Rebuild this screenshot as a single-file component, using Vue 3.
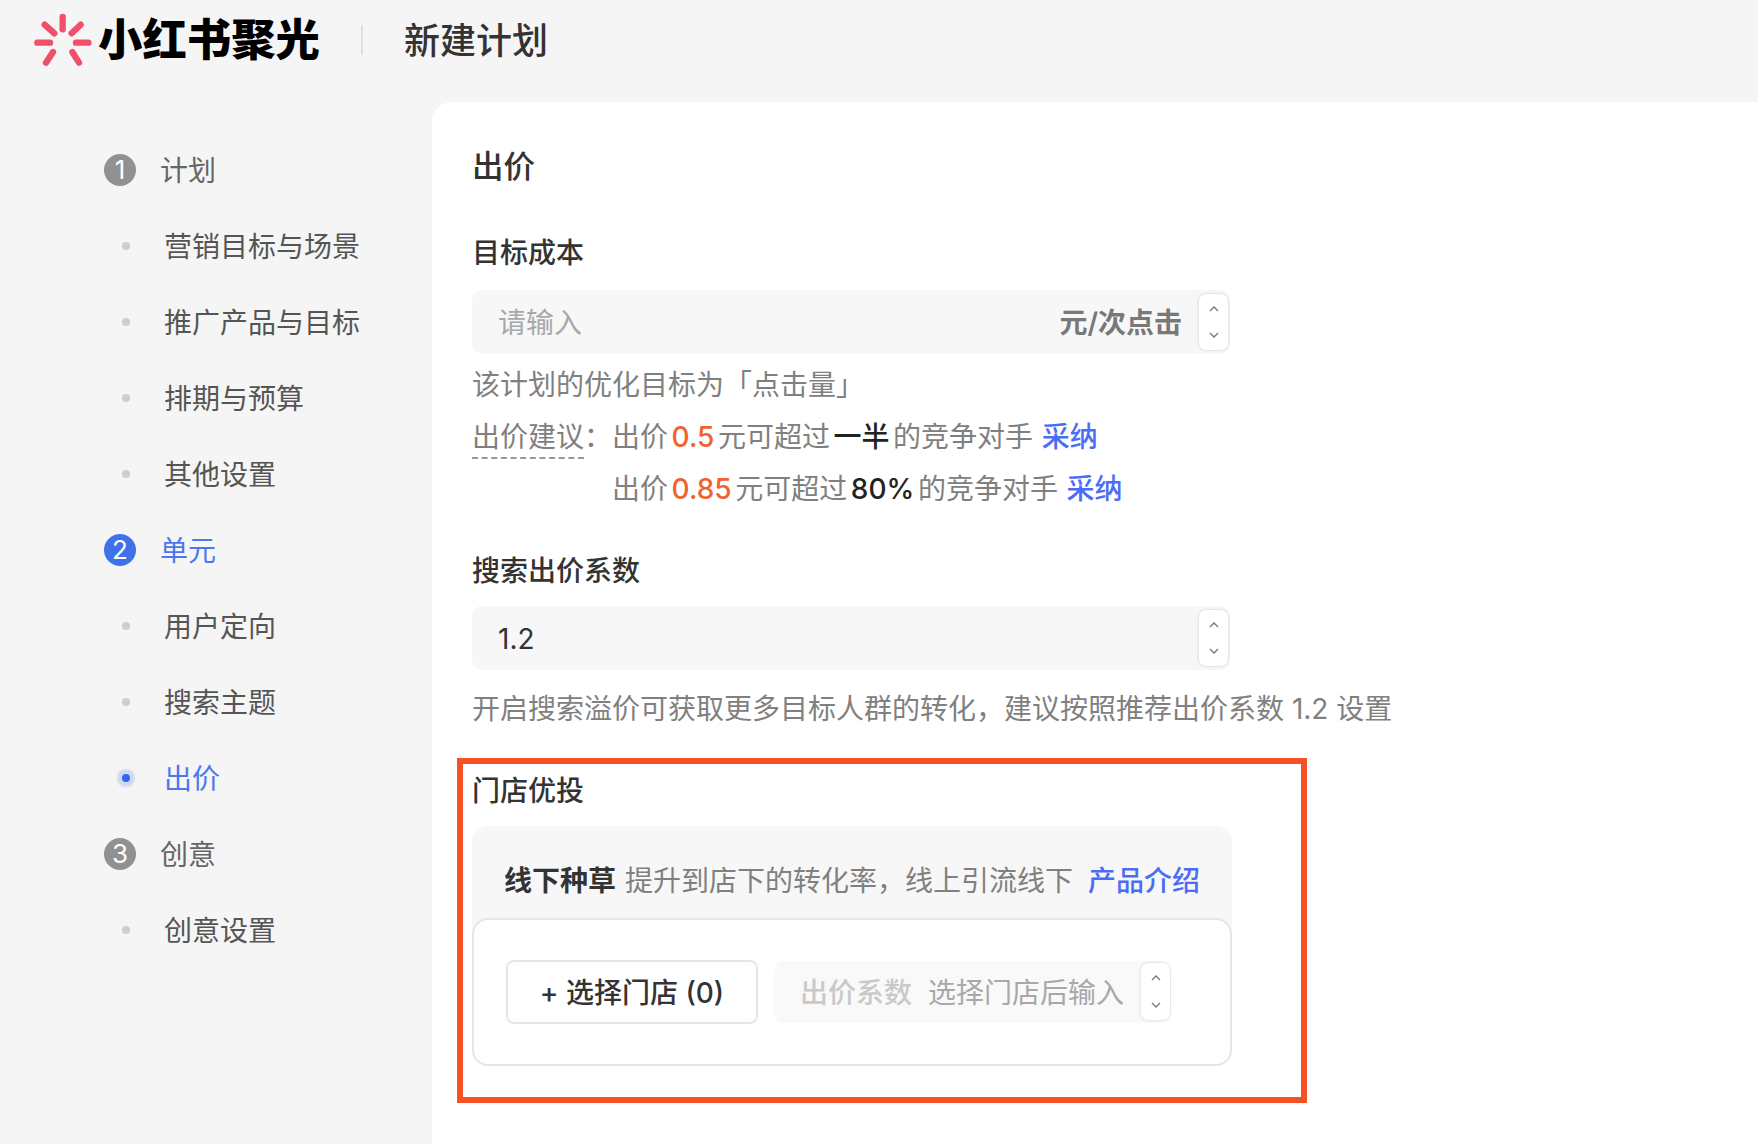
<script setup>
const nav = [
  { n: 1, label: '计划', kind: 'step' },
  { label: '营销目标与场景', kind: 'sub' },
  { label: '推广产品与目标', kind: 'sub' },
  { label: '排期与预算', kind: 'sub' },
  { label: '其他设置', kind: 'sub' },
  { n: 2, label: '单元', kind: 'step', active: true },
  { label: '用户定向', kind: 'sub' },
  { label: '搜索主题', kind: 'sub' },
  { label: '出价', kind: 'sub', active: true },
  { n: 3, label: '创意', kind: 'step' },
  { label: '创意设置', kind: 'sub' },
]
</script>

<template>
  <div class="page">
    <header class="top">
      <svg class="logo-mark" viewBox="36 36 180 168" width="60" height="56" aria-hidden="true">
        <g stroke="#f0506a" stroke-width="19" stroke-linecap="round" fill="none">
          <path d="M128 51V88" />
          <path d="M52 128H90" />
          <path d="M168 128H205" />
          <path d="M74 74L103 100" />
          <path d="M182 74L155 100" />
          <path d="M78 188L99 156" />
          <path d="M177 188L157 156" />
        </g>
      </svg>
      <span class="logo-text">小红书聚光</span>
      <span class="divider"></span>
      <span class="page-title">新建计划</span>
    </header>
    <div class="body">
      <aside class="side">
        <div v-for="item in nav" :key="item.label" class="row" :class="[item.kind, { active: item.active }]">
          <span v-if="item.kind === 'step'" class="num">{{ item.n }}</span>
          <span v-else class="dot-box"><i class="dot"></i></span>
          <span class="row-label">{{ item.label }}</span>
        </div>
      </aside>
      <main class="card">
        <h2 class="title">出价</h2>

        <div class="label first">目标成本</div>
        <div class="input">
          <span class="placeholder">请输入</span>
          <span class="suffix">元/次点击</span>
          <span class="spin">
            <svg viewBox="0 0 10 6" width="10" height="6"><path d="M1 5L5 1L9 5" /></svg>
            <svg viewBox="0 0 10 6" width="10" height="6"><path d="M1 1L5 5L9 1" /></svg>
          </span>
        </div>
        <p class="help h1">该计划的优化目标为「点击量」</p>
        <div class="advice">
          <div class="advice-label"><span class="dashed">出价建议</span>：</div>
          <div class="advice-lines">
            <div>出价 <b class="hot">0.5</b> 元可超过 <b class="strong">一半</b> 的竞争对手 <a class="link adopt">采纳</a></div>
            <div>出价 <b class="hot">0.85</b> 元可超过 <b class="strong">80%</b> 的竞争对手 <a class="link adopt">采纳</a></div>
          </div>
        </div>

        <div class="label second">搜索出价系数</div>
        <div class="input">
          <span class="value">1.2</span>
          <span class="spin">
            <svg viewBox="0 0 10 6" width="10" height="6"><path d="M1 5L5 1L9 5" /></svg>
            <svg viewBox="0 0 10 6" width="10" height="6"><path d="M1 1L5 5L9 1" /></svg>
          </span>
        </div>
        <p class="help h2">开启搜索溢价可获取更多目标人群的转化，建议按照推荐出价系数 1.2 设置</p>

        <section class="store">
          <div class="highlight"></div>
          <div class="label store-label">门店优投</div>
          <div class="panel">
            <div class="panel-head">
              <b class="strong-title">线下种草</b>
              <span class="desc">提升到店下的转化率，线上引流线下</span>
              <a class="link">产品介绍</a>
            </div>
            <div class="panel-body">
              <button class="pick" type="button">+ 选择门店 (0)</button>
              <div class="input small">
                <span class="dim">出价系数</span>
                <span class="hint">选择门店后输入</span>
                <span class="spin">
                  <svg viewBox="0 0 10 6" width="10" height="6"><path d="M1 5L5 1L9 5" /></svg>
                  <svg viewBox="0 0 10 6" width="10" height="6"><path d="M1 1L5 5L9 1" /></svg>
                </span>
              </div>
            </div>
          </div>
        </section>
      </main>
    </div>
  </div>
</template>

<style>
html, body { margin: 0; background: #f5f5f5; }
</style>

<style scoped>
.page {
  width: 1758px;
  height: 1144px;
  overflow: hidden;
  background: #f5f5f5;
  font-family: "Inter", "Noto Sans CJK SC", sans-serif;
  font-size: 28px;
  line-height: 40px;
  color: #333;
}
.top { height: 102px; display: flex; align-items: center; padding-left: 32px; padding-bottom: 22px; box-sizing: border-box; }
.logo-mark { flex: none; }
.logo-text { margin-left: 6px; font-size: 44.4px; font-weight: 900; color: #000; line-height: 56px; width: 222px; }
.divider { width: 2px; height: 30px; background: #e0e0e0; margin-left: 41px; }
.page-title { margin-left: 41px; font-size: 36px; font-weight: 500; color: #333; position: relative; top: 1px; }
.body { display: flex; height: 1042px; }
.side { width: 432px; flex: none; padding: 30px 0 0 104px; box-sizing: border-box; }
.row { height: 76px; display: flex; align-items: center; }
.num {
  width: 32px; height: 32px; border-radius: 50%; background: #919191; color: #fff;
  display: flex; align-items: center; justify-content: center; font-size: 26px; line-height: 32px;
}
.row-label { color: #666; padding-top: 2px; }
.step .row-label { margin-left: 24px; }
.sub .row-label { color: #555; margin-left: 22px; }
.dot-box { width: 32px; height: 32px; display: flex; align-items: center; justify-content: center; margin-left: 6px; }
.dot { width: 8px; height: 8px; border-radius: 50%; background: #cdcdcd; }
.active .num { background: #3f72e8; }
.active .row-label { color: #4a78ee; }
.sub.active .dot { background: #2f68ee; box-shadow: 0 0 2px 5px rgba(63, 114, 232, 0.22); }
.card { flex: 1; background: #fff; border-radius: 20px 0 0 0; padding: 45px 0 0 40px; box-sizing: border-box; }
.title { margin: 0; font-size: 31.5px; font-weight: 500; line-height: 40px; color: #333; }
.label { font-weight: 500; color: #333; }
.first { margin-top: 46px; margin-bottom: 17px; }
.second { margin-top: 42px; margin-bottom: 15px; }
.input {
  position: relative; width: 758px; height: 64px; background: #f7f7f7; border-radius: 10px;
  display: flex; align-items: center; padding: 2px 0 0 26px; box-sizing: border-box;
}
.placeholder { color: #a8a8a8; }
.value { color: #333; }
.suffix { margin-left: auto; margin-right: 48px; font-weight: 600; color: #787878; }
.spin {
  position: absolute; right: 2px; top: 4px; width: 29px; height: 56px; background: #fff; border-radius: 7px;
  box-shadow: 0 0 3px rgba(0, 0, 0, 0.18); display: flex; flex-direction: column; align-items: center;
  justify-content: space-between; padding: 12px 0; box-sizing: border-box;
}
.spin svg { fill: none; stroke: #777; stroke-width: 1.3; }
.help { margin: 0; color: #808080; }
.h1 { margin-top: 11px; }
.h2 { margin-top: 19px; }
.advice { display: flex; margin-top: 12px; color: #808080; }
.advice-label { width: 140px; flex: none; height: 40px; white-space: nowrap; }
.dashed { display: inline-block; border-bottom: 2px dashed #999; }
.advice-lines { display: flex; flex-direction: column; gap: 12px; word-spacing: -4.3px; }
.hot { color: #f0632f; font-weight: 500; }
.strong { color: #222; font-weight: 500; }
.link { color: #4a6cf7; font-weight: 500; }
.adopt { margin-left: 5px; }
.store { position: relative; }
.highlight {
  position: absolute; left: -15px; top: -13px; width: 850px; height: 345px;
  border: 6px solid #f35226; box-sizing: border-box; pointer-events: none;
}
.store-label { margin-top: 42px; margin-bottom: 15px; }
.panel { width: 760px; background: #f7f7f7; border-radius: 16px; }
.panel-head { height: 92px; padding: 35px 0 0 32px; box-sizing: border-box; display: flex; }
.strong-title { font-weight: 600; color: #333; }
.desc { margin-left: 9px; color: #808080; }
.panel-head .link { margin-left: 15px; }
.panel-body {
  height: 148px; background: #fff; border: 2px solid #e6e6e6; border-radius: 16px; box-sizing: border-box;
  padding: 40px 0 0 32px; display: flex; gap: 16px;
}
.pick {
  width: 252px; height: 64px; background: #fff; border: 2px solid #e6e6e6; border-radius: 8px; box-sizing: border-box;
  font: inherit; font-weight: 500; color: #333; padding: 2px 0 0; line-height: 40px;
}
.input.small { width: 397px; height: 62px; background: #f9f9f9; margin-top: 1px; padding-left: 26px; }
.small .spin { top: 2px; right: 1px; height: 57px; }
.dim { color: #c9c9c9; font-weight: 500; }
.hint { margin-left: 16px; color: #a8a8a8; }
</style>
